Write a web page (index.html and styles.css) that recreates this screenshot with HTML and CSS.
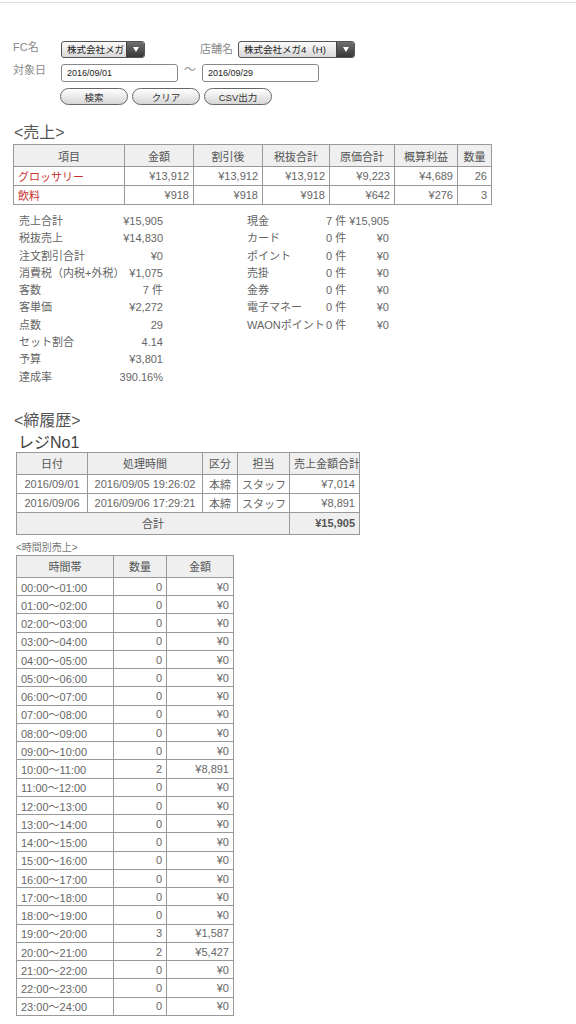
FILE: index.html
```html
<!DOCTYPE html>
<html lang="ja">
<head>
  <meta charset="UTF-8" />
  <meta name="viewport" content="width=device-width, initial-scale=1.0"/>
  <title>売上日報</title>
  <link rel="stylesheet" href="styles.css">
</head>
<body>
  <div class="topline"></div>
  <div class="page">
    <div class="search">
      <div class="row row-select">
        <span class="label">FC名</span>
        <div class="select fc">
          <span class="select-text">株式会社メガ</span>
          <span class="select-arrow"></span>
        </div>
        <span class="label shop">店舗名</span>
        <div class="select store">
          <span class="select-text">株式会社メガ4（H)</span>
          <span class="select-arrow"></span>
        </div>
      </div>
      <div class="row row-date">
        <span class="label">対象日</span>
        <input class="date" type="text" value="2016/09/01">
        <span class="tilde">〜</span>
        <input class="date" type="text" value="2016/09/29">
      </div>
      <div class="row row-buttons">
        <button class="btn">検索</button>
        <button class="btn">クリア</button>
        <button class="btn">CSV出力</button>
      </div>
    </div>

    <h2 class="section-title">&lt;売上&gt;</h2>
    <table class="grid sales">
      <colgroup>
        <col style="width:111px"><col style="width:69px"><col style="width:69px"><col style="width:67px">
        <col style="width:65px"><col style="width:63px"><col style="width:34px">
      </colgroup>
      <tr>
        <th>項目</th><th>金額</th><th>割引後</th><th>税抜合計</th><th>原価合計</th><th>概算利益</th><th>数量</th>
      </tr>
      <tr>
        <td class="name">グロッサリー</td><td>¥13,912</td><td>¥13,912</td><td>¥13,912</td><td>¥9,223</td><td>¥4,689</td><td>26</td>
      </tr>
      <tr>
        <td class="name">飲料</td><td>¥918</td><td>¥918</td><td>¥918</td><td>¥642</td><td>¥276</td><td>3</td>
      </tr>
    </table>

    <div class="summary">
      <div class="sum-left">
        <span>売上合計</span><span class="r">¥15,905</span>
        <span>税抜売上</span><span class="r">¥14,830</span>
        <span>注文割引合計</span><span class="r">¥0</span>
        <span>消費税（内税+外税）</span><span class="r">¥1,075</span>
        <span>客数</span><span class="r">7 件</span>
        <span>客単価</span><span class="r">¥2,272</span>
        <span>点数</span><span class="r">29</span>
        <span>セット割合</span><span class="r">4.14</span>
        <span>予算</span><span class="r">¥3,801</span>
        <span>達成率</span><span class="r">390.16%</span>
      </div>
      <div class="sum-right">
        <span>現金</span><span>7 件</span><span class="r">¥15,905</span>
        <span>カード</span><span>0 件</span><span class="r">¥0</span>
        <span>ポイント</span><span>0 件</span><span class="r">¥0</span>
        <span>売掛</span><span>0 件</span><span class="r">¥0</span>
        <span>金券</span><span>0 件</span><span class="r">¥0</span>
        <span>電子マネー</span><span>0 件</span><span class="r">¥0</span>
        <span>WAONポイント</span><span>0 件</span><span class="r">¥0</span>
      </div>
    </div>

    <h2 class="section-title closing">&lt;締履歴&gt;</h2>
    <h3 class="register">レジNo1</h3>
    <table class="grid history">
      <colgroup>
        <col style="width:71px"><col style="width:115px"><col style="width:35px"><col style="width:52px"><col style="width:70px">
      </colgroup>
      <tr>
        <th>日付</th><th>処理時間</th><th>区分</th><th>担当</th><th>売上金額合計</th>
      </tr>
      <tr>
        <td class="c">2016/09/01</td><td class="c">2016/09/05 19:26:02</td><td class="c">本締</td><td class="c">スタッフ</td><td>¥7,014</td>
      </tr>
      <tr>
        <td class="c">2016/09/06</td><td class="c">2016/09/06 17:29:21</td><td class="c">本締</td><td class="c">スタッフ</td><td>¥8,891</td>
      </tr>
      <tr class="total">
        <th colspan="4">合計</th><th class="total-value">¥15,905</th>
      </tr>
    </table>

    <div class="sub-title">&lt;時間別売上&gt;</div>
    <table class="grid hourly">
      <colgroup>
        <col style="width:97px"><col style="width:53px"><col style="width:67px">
      </colgroup>
      <tr><th>時間帯</th><th>数量</th><th>金額</th></tr>
      <tr><td class="name">00:00〜01:00</td><td>0</td><td>¥0</td></tr>
      <tr><td class="name">01:00〜02:00</td><td>0</td><td>¥0</td></tr>
      <tr><td class="name">02:00〜03:00</td><td>0</td><td>¥0</td></tr>
      <tr><td class="name">03:00〜04:00</td><td>0</td><td>¥0</td></tr>
      <tr><td class="name">04:00〜05:00</td><td>0</td><td>¥0</td></tr>
      <tr><td class="name">05:00〜06:00</td><td>0</td><td>¥0</td></tr>
      <tr><td class="name">06:00〜07:00</td><td>0</td><td>¥0</td></tr>
      <tr><td class="name">07:00〜08:00</td><td>0</td><td>¥0</td></tr>
      <tr><td class="name">08:00〜09:00</td><td>0</td><td>¥0</td></tr>
      <tr><td class="name">09:00〜10:00</td><td>0</td><td>¥0</td></tr>
      <tr><td class="name">10:00〜11:00</td><td>2</td><td>¥8,891</td></tr>
      <tr><td class="name">11:00〜12:00</td><td>0</td><td>¥0</td></tr>
      <tr><td class="name">12:00〜13:00</td><td>0</td><td>¥0</td></tr>
      <tr><td class="name">13:00〜14:00</td><td>0</td><td>¥0</td></tr>
      <tr><td class="name">14:00〜15:00</td><td>0</td><td>¥0</td></tr>
      <tr><td class="name">15:00〜16:00</td><td>0</td><td>¥0</td></tr>
      <tr><td class="name">16:00〜17:00</td><td>0</td><td>¥0</td></tr>
      <tr><td class="name">17:00〜18:00</td><td>0</td><td>¥0</td></tr>
      <tr><td class="name">18:00〜19:00</td><td>0</td><td>¥0</td></tr>
      <tr><td class="name">19:00〜20:00</td><td>3</td><td>¥1,587</td></tr>
      <tr><td class="name">20:00〜21:00</td><td>2</td><td>¥5,427</td></tr>
      <tr><td class="name">21:00〜22:00</td><td>0</td><td>¥0</td></tr>
      <tr><td class="name">22:00〜23:00</td><td>0</td><td>¥0</td></tr>
      <tr><td class="name">23:00〜24:00</td><td>0</td><td>¥0</td></tr>
    </table>
  </div>
</body>
</html>
```

FILE: styles.css
```css
body {
  margin: 0;
  background-color: #ffffff;
  color: #666;
  font-family: "Liberation Sans", "Noto Sans CJK JP", sans-serif;
}

.topline {
  height: 2px;
  border-bottom: 1px solid #e2dada;
}

.page {
  padding: 38px 0 0 13px;
}

/* 検索フォーム */
.row {
  display: flex;
  align-items: center;
}

.row-select {
  height: 17px;
}

.row-date {
  height: 18px;
  margin-top: 6px;
}

.row-buttons {
  height: 17px;
  margin-top: 6px;
  padding-left: 47px;
  gap: 4px;
}

.label {
  width: 48px;
  font-size: 11px;
  line-height: 13px;
  color: #888;
  align-self: flex-start;
}

.label.shop {
  width: 38px;
  margin-left: 55px;
  align-self: center;
}

.select {
  display: flex;
  height: 17px;
  box-sizing: border-box;
  border: 1px solid #555;
  border-radius: 3px;
  overflow: hidden;
  background: linear-gradient(#fbfbfb, #d9d9d9);
}

.select.fc {
  width: 84px;
}

.select.store {
  width: 117px;
}

.select-text {
  flex: 1;
  padding-left: 5px;
  font-size: 9.5px;
  line-height: 15px;
  color: #222;
  white-space: nowrap;
}

.select-arrow {
  width: 17px;
  display: flex;
  align-items: center;
  justify-content: center;
  border-left: 1px solid #444;
  background: linear-gradient(#707070, #383838);
}

.select-arrow::after {
  content: "";
  border-left: 3px solid transparent;
  border-right: 3px solid transparent;
  border-top: 5px solid #fff;
}

.date {
  width: 117px;
  height: 18px;
  box-sizing: border-box;
  margin: 0;
  padding: 0 5px;
  border: 1px solid #888;
  border-radius: 3px;
  font-family: "Liberation Sans", sans-serif;
  font-size: 9px;
  color: #222;
}

.tilde {
  width: 24px;
  text-align: center;
  font-size: 12px;
  line-height: 12px;
  color: #999;
  align-self: flex-start;
}

.btn {
  width: 68px;
  height: 17px;
  padding: 0;
  border: 1px solid #666;
  border-radius: 9px;
  background: linear-gradient(#ffffff, #d6d6d6);
  font-family: inherit;
  font-size: 9.5px;
  color: #333;
}

/* 見出し */
.section-title {
  height: 20px;
  margin: 18px 0 1px 1px;
  font-size: 16px;
  font-weight: normal;
  line-height: 20px;
  color: #555;
}

.section-title.closing {
  margin-top: 25px;
  margin-bottom: 0;
}

.register {
  height: 18px;
  margin: 3px 0 0 5px;
  font-size: 16px;
  font-weight: normal;
  line-height: 18px;
  color: #444;
}

.sub-title {
  height: 14px;
  margin: 6px 0 0 3px;
  font-size: 10px;
  line-height: 14px;
  color: #777;
}

/* テーブル */
.grid {
  border-collapse: collapse;
  table-layout: fixed;
  font-size: 11px;
  color: #666;
}

.grid th,
.grid td {
  border: 1px solid #999;
  padding: 0 4px;
  white-space: nowrap;
  overflow: hidden;
}

.grid th {
  height: 21px;
  background-color: #efefef;
  font-weight: normal;
  color: #555;
}

.grid td {
  height: 18px;
  text-align: right;
}

.grid td.name {
  text-align: left;
}

.grid td.c {
  text-align: center;
}

.sales {
  width: 478px;
}

.sales td.name {
  color: #c8302e;
}

.history {
  width: 343px;
  margin-left: 3px;
}

.history .total th {
  height: 21px;
}

.history .total-value {
  text-align: right;
  font-weight: bold;
}

.hourly {
  width: 217px;
  margin-left: 3px;
  margin-bottom: 8px;
}

.hourly td {
  height: 17.25px;
}

/* 集計 */
.summary {
  display: flex;
  align-items: flex-start;
  margin-top: 8px;
  padding-left: 6px;
  font-size: 11px;
  color: #666;
}

.sum-left,
.sum-right {
  display: grid;
  grid-auto-rows: 17.3px;
  line-height: 17.3px;
  white-space: nowrap;
}

.sum-left {
  grid-template-columns: minmax(0, 1fr) auto;
  width: 144px;
}

.sum-right {
  grid-template-columns: 79px 20px minmax(0, 1fr);
  width: 142px;
  margin-left: 84px;
}

.r {
  text-align: right;
}
```
